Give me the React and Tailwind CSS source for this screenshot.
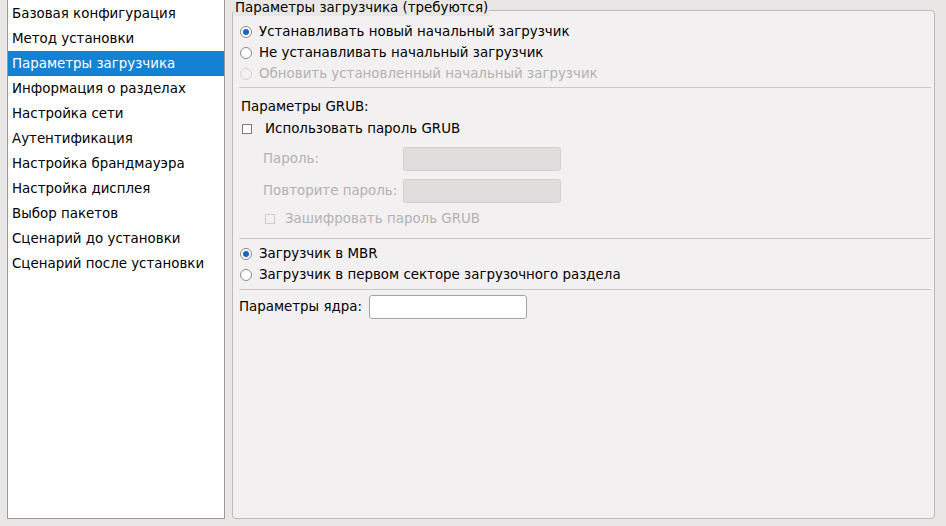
import React from 'react';

const items = [
  'Базовая конфигурация',
  'Метод установки',
  'Параметры загрузчика',
  'Информация о разделах',
  'Настройка сети',
  'Аутентификация',
  'Настройка брандмауэра',
  'Настройка дисплея',
  'Выбор пакетов',
  'Сценарий до установки',
  'Сценарий после установки',
];

const Radio = ({ checked, disabled }) => (
  <span
    className={`w-[12px] h-[12px] rounded-full border flex items-center justify-center shrink-0 ${
      disabled ? 'border-[#d2cfcf] bg-[#f2f0f0]' : 'border-[#8c8888] bg-white'
    }`}
  >
    {checked && <span className="w-[6px] h-[6px] rounded-full bg-[#1565c8]" />}
  </span>
);

const Check = ({ disabled }) => (
  <span
    className={`w-[10px] h-[10px] border shrink-0 ${
      disabled ? 'border-[#cfcccc] bg-[#f2f0f0]' : 'border-[#7d7878] bg-white'
    }`}
  />
);

const RadioRow = ({ label, checked, disabled, className = '' }) => (
  <div className={`h-[20px] flex items-center pl-[1px] ${className}`}>
    <Radio checked={checked} disabled={disabled} />
    <span className={`ml-[7px] ${disabled ? 'text-[#b4b1b1]' : 'text-black'}`}>{label}</span>
  </div>
);

const Sep = ({ className = '' }) => <div className={`h-px bg-[#c9c6c6] mr-[3px] ${className}`} />;

const App = () => {
  return (
    <div
      className="w-[946px] h-[526px] bg-[#e8e7e6] flex text-[13.4px] leading-none overflow-hidden"
      style={{ fontFamily: '"DejaVu Sans", "Liberation Sans", sans-serif' }}
    >
      <div className="ml-[7px] w-[218px] h-[519px] bg-white border-x border-b border-[#9f9898] flex flex-col pt-px">
        {items.map((it, i) => (
          <div
            key={it}
            className={`h-[25px] flex items-center pl-[4px] ${
              i === 2 ? 'bg-[#1482d4] text-white' : 'text-black'
            }`}
          >
            {it}
          </div>
        ))}
      </div>

      <div className="relative ml-[7px] w-[703px] h-[519px] pt-[10px]">
        <span className="absolute top-0 left-[2px] h-[16px] px-px bg-[#e8e7e6] text-black flex items-center">
          Параметры загрузчика (требуются)
        </span>
        <div className="h-full bg-[#f2f0f0] border border-[#bdbaba] rounded-[4px] pl-[6px] pt-[11px] flex flex-col">
          <RadioRow label="Устанавливать новый начальный загрузчик" checked />
          <RadioRow label="Не устанавливать начальный загрузчик" className="mt-[1px]" />
          <RadioRow label="Обновить установленный начальный загрузчик" disabled className="mt-[1px]" />
          <Sep className="mt-[3px]" />
          <div className="h-[20px] mt-[9px] flex items-center pl-[2px] text-black">Параметры GRUB:</div>
          <div className="h-[20px] mt-[2px] flex items-center pl-[3px]">
            <Check />
            <span className="ml-[13px] text-black">Использовать пароль GRUB</span>
          </div>
          <div className="h-[24px] mt-[8px] flex items-center pl-[24px]">
            <span className="w-[140px] text-[#b4b1b1]">Пароль:</span>
            <span className="w-[158px] h-[24px] bg-[#e0dddc] border border-[#d3cfcf] rounded-[3px]" />
          </div>
          <div className="h-[24px] mt-[8px] flex items-center pl-[24px]">
            <span className="w-[140px] text-[#b4b1b1]">Повторите пароль:</span>
            <span className="w-[158px] h-[24px] bg-[#e0dddc] border border-[#d3cfcf] rounded-[3px]" />
          </div>
          <div className="h-[20px] mt-[6px] flex items-center pl-[26px]">
            <Check disabled />
            <span className="ml-[10px] text-[#b4b1b1]">Зашифровать пароль GRUB</span>
          </div>
          <Sep className="mt-[9px]" />
          <RadioRow label="Загрузчик в MBR" checked className="mt-[5px]" />
          <RadioRow label="Загрузчик в первом секторе загрузочного раздела" className="mt-px" />
          <Sep className="mt-[4px]" />
          <div className="h-[24px] mt-[5px] flex items-center">
            <span className="w-[130px] text-black">Параметры ядра:</span>
            <span className="w-[158px] h-[24px] bg-white border border-[#a8a3a3] rounded-[3px]" />
          </div>
        </div>
      </div>
    </div>
  );
};

export default App;
